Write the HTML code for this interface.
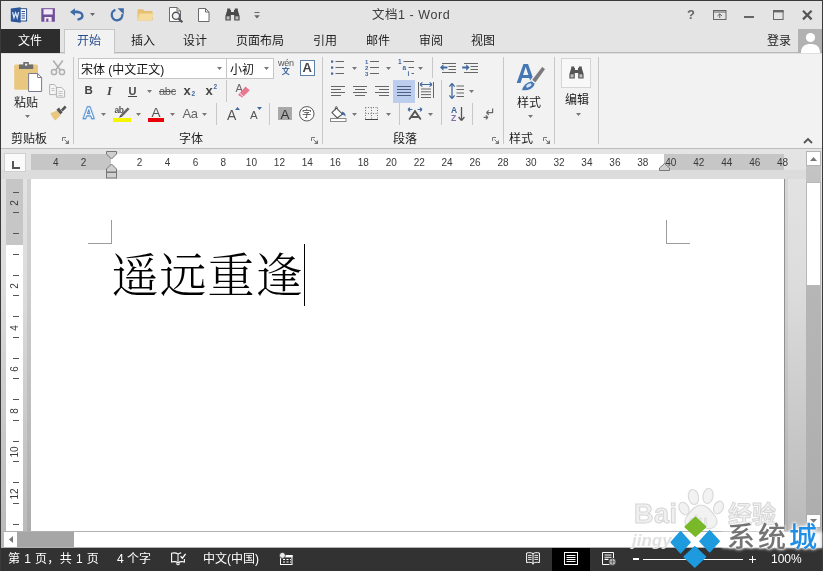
<!DOCTYPE html>
<html lang="zh-CN"><head><meta charset="utf-8"><title>文档1 - Word</title>
<style>
html,body{margin:0;padding:0;}
body{width:823px;height:571px;overflow:hidden;background:#e4e4e4;font-family:"Liberation Sans","Noto Sans CJK SC",sans-serif;font-size:12px;color:#262626;}
#win{position:relative;width:823px;height:571px;overflow:hidden;will-change:transform;}
.a{position:absolute;display:block;}
.t{white-space:nowrap;}
svg{overflow:visible;}
</style></head><body><div id="win">
<div class="a" style="left:0px;top:0px;width:823px;height:53px;background:#e4e4e4;"></div>
<div class="a" style="left:0px;top:53px;width:823px;height:96px;background:#f2f2f2;"></div>
<div class="a" style="left:0px;top:52px;width:823px;height:1px;background:#b8b8b8;"></div>
<div class="a" style="left:0px;top:53px;width:823px;height:1px;background:#dedede;"></div>
<div class="a" style="left:0px;top:148px;width:823px;height:1px;background:#bdbdbd;"></div>
<div class="a" style="left:0px;top:149px;width:823px;height:399px;background:#e3e3e3;background:linear-gradient(#e4e4e4 0%,#dcdcdc 35%,#c8c8c8 70%,#b8b8b8 100%);"></div>
<div class="a" style="left:1px;top:170px;width:805px;height:9px;background:#dcdcdc;"></div>
<span class="a t" style="left:372px;top:8.5px;font-size:12.5px;line-height:12.5px;color:#3c3c3c;letter-spacing:0.55px;">文档1 - Word</span>
<div class="a" style="left:1px;top:29px;width:59px;height:24px;background:#2d2d2d;"></div>
<span class="a t" style="left:18px;top:35px;font-size:12px;line-height:12px;color:#fff;">文件</span>
<div class="a" style="left:64px;top:29px;width:51px;height:25px;background:#f2f2f2;border:1px solid #c6c6c6;border-bottom:none;box-sizing:border-box;"></div>
<span class="a t" style="left:77px;top:35px;font-size:12px;line-height:12px;color:#2b4f8e;">开始</span>
<span class="a t" style="left:131px;top:35px;font-size:12px;line-height:12px;color:#222;">插入</span>
<span class="a t" style="left:183px;top:35px;font-size:12px;line-height:12px;color:#222;">设计</span>
<span class="a t" style="left:236px;top:35px;font-size:12px;line-height:12px;color:#222;">页面布局</span>
<span class="a t" style="left:313px;top:35px;font-size:12px;line-height:12px;color:#222;">引用</span>
<span class="a t" style="left:366px;top:35px;font-size:12px;line-height:12px;color:#222;">邮件</span>
<span class="a t" style="left:419px;top:35px;font-size:12px;line-height:12px;color:#222;">审阅</span>
<span class="a t" style="left:471px;top:35px;font-size:12px;line-height:12px;color:#222;">视图</span>
<span class="a t" style="left:767px;top:34.5px;font-size:12px;line-height:12px;color:#222;">登录</span>
<div class="a" style="left:798px;top:29px;width:25px;height:24px;background:#b2b2b2;"></div>
<svg class="a" style="left:798px;top:29px;" width="25" height="24" viewBox="0 0 25 24"><circle cx="12.5" cy="8.5" r="4.6" fill="#fff"/><path d="M3 24C3 17 7 15 12.5 15S22 17 22 24Z" fill="#fff"/></svg>
<span class="a t" style="left:11px;top:133px;font-size:12px;line-height:12px;color:#1c1c1c;">剪贴板</span>
<span class="a t" style="left:179px;top:133px;font-size:12px;line-height:12px;color:#1c1c1c;">字体</span>
<span class="a t" style="left:393px;top:133px;font-size:12px;line-height:12px;color:#1c1c1c;">段落</span>
<span class="a t" style="left:509px;top:133px;font-size:12px;line-height:12px;color:#1c1c1c;">样式</span>
<div class="a" style="left:73px;top:57px;width:1px;height:87px;background:#c8c8c8;"></div>
<div class="a" style="left:322px;top:57px;width:1px;height:87px;background:#c8c8c8;"></div>
<div class="a" style="left:503px;top:57px;width:1px;height:87px;background:#c8c8c8;"></div>
<div class="a" style="left:554px;top:57px;width:1px;height:87px;background:#c8c8c8;"></div>
<div class="a" style="left:598px;top:57px;width:1px;height:87px;background:#c8c8c8;"></div>
<svg class="a" style="left:62px;top:137px;" width="7" height="7" viewBox="0 0 7 7"><path d="M0.5 4V0.5H4" fill="none" stroke="#777" stroke-width="1"/><path d="M2.5 2.5L5.5 5.5" fill="none" stroke="#777" stroke-width="1"/><path d="M7 3V7H3Z" fill="#777"/></svg>
<svg class="a" style="left:311px;top:137px;" width="7" height="7" viewBox="0 0 7 7"><path d="M0.5 4V0.5H4" fill="none" stroke="#777" stroke-width="1"/><path d="M2.5 2.5L5.5 5.5" fill="none" stroke="#777" stroke-width="1"/><path d="M7 3V7H3Z" fill="#777"/></svg>
<svg class="a" style="left:492px;top:137px;" width="7" height="7" viewBox="0 0 7 7"><path d="M0.5 4V0.5H4" fill="none" stroke="#777" stroke-width="1"/><path d="M2.5 2.5L5.5 5.5" fill="none" stroke="#777" stroke-width="1"/><path d="M7 3V7H3Z" fill="#777"/></svg>
<svg class="a" style="left:543px;top:137px;" width="7" height="7" viewBox="0 0 7 7"><path d="M0.5 4V0.5H4" fill="none" stroke="#777" stroke-width="1"/><path d="M2.5 2.5L5.5 5.5" fill="none" stroke="#777" stroke-width="1"/><path d="M7 3V7H3Z" fill="#777"/></svg>
<span class="a t" style="left:14px;top:97px;font-size:12px;line-height:12px;color:#1c1c1c;">粘贴</span>
<svg class="a" style="left:25px;top:115px;" width="5" height="3" viewBox="0 0 5 3"><path d="M0 0H5L2.5 3Z" fill="#777"/></svg>
<div class="a" style="left:78px;top:58px;width:149px;height:21px;background:#fff;border:1px solid #c6c6c6;box-sizing:border-box;"></div>
<span class="a t" style="left:81px;top:63.5px;font-size:12px;line-height:12px;color:#111;">宋体 (中文正文)</span>
<svg class="a" style="left:217px;top:67px;" width="5" height="3" viewBox="0 0 5 3"><path d="M0 0H5L2.5 3Z" fill="#777"/></svg>
<div class="a" style="left:226px;top:58px;width:48px;height:21px;background:#fff;border:1px solid #c6c6c6;box-sizing:border-box;"></div>
<span class="a t" style="left:230px;top:63.5px;font-size:12px;line-height:12px;color:#111;">小初</span>
<svg class="a" style="left:264px;top:67px;" width="5" height="3" viewBox="0 0 5 3"><path d="M0 0H5L2.5 3Z" fill="#777"/></svg>
<span class="a t" style="left:517px;top:96.5px;font-size:12px;line-height:12px;color:#1c1c1c;">样式</span>
<svg class="a" style="left:528px;top:115px;" width="5" height="3" viewBox="0 0 5 3"><path d="M0 0H5L2.5 3Z" fill="#777"/></svg>
<div class="a" style="left:561px;top:58px;width:30px;height:30px;background:#f8f8f8;border:1px solid #d4d4d4;box-sizing:border-box;"></div>
<span class="a t" style="left:565px;top:94px;font-size:12px;line-height:12px;color:#1c1c1c;">编辑</span>
<svg class="a" style="left:576px;top:113px;" width="5" height="3" viewBox="0 0 5 3"><path d="M0 0H5L2.5 3Z" fill="#777"/></svg>
<svg class="a" style="left:803px;top:136.5px;" width="10" height="7" viewBox="0 0 10 7"><path d="M1 6L5 2L9 6" fill="none" stroke="#555" stroke-width="1.8"/></svg>
<div class="a" style="left:4px;top:153px;width:22px;height:19px;background:#fafafa;border:1px solid #d0d0d0;box-sizing:border-box;"></div>
<svg class="a" style="left:12px;top:161px;" width="8" height="8" viewBox="0 0 8 8"><path d="M1 0V7H8" fill="none" stroke="#555" stroke-width="2"/></svg>
<div class="a" style="left:31px;top:154px;width:753px;height:16px;background:#c6c6c6;"></div>
<div class="a" style="left:111px;top:154px;width:553px;height:16px;background:#fff;"></div>
<span class="a t" style="left:45.7px;top:158px;width:20px;text-align:center;font-size:10px;line-height:10px;color:#3a3a3a;">4</span>
<span class="a t" style="left:73.6px;top:158px;width:20px;text-align:center;font-size:10px;line-height:10px;color:#3a3a3a;">2</span>
<span class="a t" style="left:129.6px;top:158px;width:20px;text-align:center;font-size:10px;line-height:10px;color:#3a3a3a;">2</span>
<span class="a t" style="left:157.5px;top:158px;width:20px;text-align:center;font-size:10px;line-height:10px;color:#3a3a3a;">4</span>
<span class="a t" style="left:185.5px;top:158px;width:20px;text-align:center;font-size:10px;line-height:10px;color:#3a3a3a;">6</span>
<span class="a t" style="left:213.4px;top:158px;width:20px;text-align:center;font-size:10px;line-height:10px;color:#3a3a3a;">8</span>
<span class="a t" style="left:241.4px;top:158px;width:20px;text-align:center;font-size:10px;line-height:10px;color:#3a3a3a;">10</span>
<span class="a t" style="left:269.4px;top:158px;width:20px;text-align:center;font-size:10px;line-height:10px;color:#3a3a3a;">12</span>
<span class="a t" style="left:297.3px;top:158px;width:20px;text-align:center;font-size:10px;line-height:10px;color:#3a3a3a;">14</span>
<span class="a t" style="left:325.3px;top:158px;width:20px;text-align:center;font-size:10px;line-height:10px;color:#3a3a3a;">16</span>
<span class="a t" style="left:353.2px;top:158px;width:20px;text-align:center;font-size:10px;line-height:10px;color:#3a3a3a;">18</span>
<span class="a t" style="left:381.2px;top:158px;width:20px;text-align:center;font-size:10px;line-height:10px;color:#3a3a3a;">20</span>
<span class="a t" style="left:409.2px;top:158px;width:20px;text-align:center;font-size:10px;line-height:10px;color:#3a3a3a;">22</span>
<span class="a t" style="left:437.1px;top:158px;width:20px;text-align:center;font-size:10px;line-height:10px;color:#3a3a3a;">24</span>
<span class="a t" style="left:465.1px;top:158px;width:20px;text-align:center;font-size:10px;line-height:10px;color:#3a3a3a;">26</span>
<span class="a t" style="left:493.0px;top:158px;width:20px;text-align:center;font-size:10px;line-height:10px;color:#3a3a3a;">28</span>
<span class="a t" style="left:521.0px;top:158px;width:20px;text-align:center;font-size:10px;line-height:10px;color:#3a3a3a;">30</span>
<span class="a t" style="left:549.0px;top:158px;width:20px;text-align:center;font-size:10px;line-height:10px;color:#3a3a3a;">32</span>
<span class="a t" style="left:576.9px;top:158px;width:20px;text-align:center;font-size:10px;line-height:10px;color:#3a3a3a;">34</span>
<span class="a t" style="left:604.9px;top:158px;width:20px;text-align:center;font-size:10px;line-height:10px;color:#3a3a3a;">36</span>
<span class="a t" style="left:632.8px;top:158px;width:20px;text-align:center;font-size:10px;line-height:10px;color:#3a3a3a;">38</span>
<span class="a t" style="left:660.8px;top:158px;width:20px;text-align:center;font-size:10px;line-height:10px;color:#3a3a3a;">40</span>
<span class="a t" style="left:688.8px;top:158px;width:20px;text-align:center;font-size:10px;line-height:10px;color:#3a3a3a;">42</span>
<span class="a t" style="left:716.7px;top:158px;width:20px;text-align:center;font-size:10px;line-height:10px;color:#3a3a3a;">44</span>
<span class="a t" style="left:744.7px;top:158px;width:20px;text-align:center;font-size:10px;line-height:10px;color:#3a3a3a;">46</span>
<span class="a t" style="left:772.6px;top:158px;width:20px;text-align:center;font-size:10px;line-height:10px;color:#3a3a3a;">48</span>
<svg class="a" style="left:106px;top:151px;" width="11" height="28" viewBox="0 0 11 28"><path d="M0.5 0.5H10.5V3L5.5 8L0.5 3Z" fill="#cfcfcf" stroke="#777"/><path d="M0.5 21V18L5.5 13L10.5 18V21Z" fill="#cfcfcf" stroke="#777"/><rect x="0.5" y="21.5" width="10" height="5.5" fill="#cfcfcf" stroke="#777"/></svg>
<svg class="a" style="left:659px;top:163px;" width="11" height="8" viewBox="0 0 11 8"><path d="M0.5 7.5V5L5.5 0.5L10.5 5V7.5Z" fill="#cfcfcf" stroke="#777"/></svg>
<div class="a" style="left:27px;top:179px;width:4px;height:353px;background:rgba(0,0,0,0.07);"></div>
<div class="a" style="left:31px;top:179px;width:753px;height:353px;background:#fff;"></div>
<div class="a" style="left:784px;top:179px;width:1px;height:353px;background:#909090;"></div>
<div class="a" style="left:785px;top:179px;width:3px;height:353px;background:rgba(0,0,0,0.05);"></div>
<div class="a" style="left:6px;top:179px;width:17px;height:353px;background:#fff;"></div>
<div class="a" style="left:6px;top:179px;width:17px;height:66px;background:#c6c6c6;"></div>
<div class="a" style="left:13px;top:192px;width:6px;height:1px;background:#555;"></div>
<div class="a" style="left:13px;top:212px;width:6px;height:1px;background:#555;"></div>
<div class="a" style="left:13px;top:233px;width:6px;height:1px;background:#555;"></div>
<div class="a" style="left:13px;top:254px;width:6px;height:1px;background:#555;"></div>
<div class="a" style="left:13px;top:275px;width:6px;height:1px;background:#555;"></div>
<div class="a" style="left:13px;top:295px;width:6px;height:1px;background:#555;"></div>
<div class="a" style="left:13px;top:316px;width:6px;height:1px;background:#555;"></div>
<div class="a" style="left:13px;top:337px;width:6px;height:1px;background:#555;"></div>
<div class="a" style="left:13px;top:358px;width:6px;height:1px;background:#555;"></div>
<div class="a" style="left:13px;top:378px;width:6px;height:1px;background:#555;"></div>
<div class="a" style="left:13px;top:399px;width:6px;height:1px;background:#555;"></div>
<div class="a" style="left:13px;top:420px;width:6px;height:1px;background:#555;"></div>
<div class="a" style="left:13px;top:441px;width:6px;height:1px;background:#555;"></div>
<div class="a" style="left:13px;top:461px;width:6px;height:1px;background:#555;"></div>
<div class="a" style="left:13px;top:482px;width:6px;height:1px;background:#555;"></div>
<div class="a" style="left:13px;top:503px;width:6px;height:1px;background:#555;"></div>
<div class="a" style="left:13px;top:524px;width:6px;height:1px;background:#555;"></div>
<span class="a t" style="left:5px;top:198.0px;width:20px;height:10px;text-align:center;font-size:10px;line-height:10px;color:#3a3a3a;transform:rotate(-90deg);">2</span>
<span class="a t" style="left:5px;top:281.0px;width:20px;height:10px;text-align:center;font-size:10px;line-height:10px;color:#3a3a3a;transform:rotate(-90deg);">2</span>
<span class="a t" style="left:5px;top:322.5px;width:20px;height:10px;text-align:center;font-size:10px;line-height:10px;color:#3a3a3a;transform:rotate(-90deg);">4</span>
<span class="a t" style="left:5px;top:364.0px;width:20px;height:10px;text-align:center;font-size:10px;line-height:10px;color:#3a3a3a;transform:rotate(-90deg);">6</span>
<span class="a t" style="left:5px;top:405.5px;width:20px;height:10px;text-align:center;font-size:10px;line-height:10px;color:#3a3a3a;transform:rotate(-90deg);">8</span>
<span class="a t" style="left:5px;top:447.0px;width:20px;height:10px;text-align:center;font-size:10px;line-height:10px;color:#3a3a3a;transform:rotate(-90deg);">10</span>
<span class="a t" style="left:5px;top:488.5px;width:20px;height:10px;text-align:center;font-size:10px;line-height:10px;color:#3a3a3a;transform:rotate(-90deg);">12</span>
<div class="a" style="left:111px;top:220px;width:1px;height:24px;background:#9c9c9c;"></div>
<div class="a" style="left:88px;top:243px;width:24px;height:1px;background:#9c9c9c;"></div>
<div class="a" style="left:666px;top:220px;width:1px;height:24px;background:#9c9c9c;"></div>
<div class="a" style="left:666px;top:243px;width:24px;height:1px;background:#9c9c9c;"></div>
<span class="a t" style="left:111.5px;top:253px;font-family:'Liberation Serif','Noto Serif CJK SC',serif;font-weight:300;font-size:47px;line-height:47px;letter-spacing:1px;color:#000;">遥远重逢</span>
<div class="a" style="left:304px;top:244px;width:1px;height:62px;background:#000;"></div>
<div class="a" style="left:806px;top:151px;width:15px;height:377px;background:#ababab;background:linear-gradient(#c6c6c6 0%,#b6b6b6 35%,#adadad 100%);"></div>
<div class="a" style="left:806px;top:151px;width:15px;height:15px;background:#fff;border:1px solid #b4b4b4;box-sizing:border-box;"></div>
<svg class="a" style="left:810px;top:157px;" width="7" height="4" viewBox="0 0 7 4"><path d="M0 4L3.5 0L7 4Z" fill="#777"/></svg>
<div class="a" style="left:806px;top:182px;width:15px;height:104px;background:#fff;border:1px solid #b8b8b8;box-sizing:border-box;"></div>
<div class="a" style="left:806px;top:514px;width:15px;height:14px;background:#fff;border:1px solid #ababab;box-sizing:border-box;"></div>
<svg class="a" style="left:810px;top:519px;" width="7" height="4" viewBox="0 0 7 4"><path d="M0 0L3.5 4L7 0Z" fill="#777"/></svg>
<div class="a" style="left:4px;top:531px;width:802px;height:16px;background:#fff;border-top:1px solid #b0b0b0;box-sizing:border-box;"></div>
<div class="a" style="left:1px;top:547px;width:821px;height:1px;background:#b4b4b4;"></div>
<div class="a" style="left:17px;top:532px;width:57px;height:15px;background:#a6a6a6;"></div>
<svg class="a" style="left:9px;top:536px;" width="4" height="7" viewBox="0 0 4 7"><path d="M4 0L0 3.5L4 7Z" fill="#777"/></svg>
<div class="a" style="left:0px;top:548px;width:823px;height:23px;background:#323232;"></div>
<span class="a t" style="left:8px;top:553px;font-size:12px;line-height:12px;color:#fff;letter-spacing:0.4px;">第 1 页，共 1 页</span>
<span class="a t" style="left:117px;top:553px;font-size:12px;line-height:12px;color:#fff;">4 个字</span>
<span class="a t" style="left:203px;top:553px;font-size:12px;line-height:12px;color:#fff;">中文(中国)</span>
<div class="a" style="left:552px;top:548px;width:38px;height:23px;background:#000;"></div>
<div class="a" style="left:643px;top:559px;width:100px;height:1px;background:#fff;"></div>
<div class="a" style="left:633px;top:558px;width:6px;height:2px;background:#fff;"></div>
<div class="a" style="left:749px;top:559px;width:7px;height:1px;background:#fff;"></div>
<div class="a" style="left:752px;top:556px;width:1px;height:7px;background:#fff;"></div>
<div class="a" style="left:693px;top:554px;width:3px;height:11px;background:#fff;"></div>
<span class="a t" style="left:771px;top:553px;font-size:12px;line-height:12px;color:#fff;">100%</span>
<div class="a" style="left:0px;top:0px;width:823px;height:1px;background:#3a3a3a;"></div>
<div class="a" style="left:0px;top:0px;width:1px;height:571px;background:#3a3a3a;"></div>
<div class="a" style="left:822px;top:0px;width:1px;height:571px;background:#3a3a3a;"></div>
<svg class="a" style="left:10px;top:7px;" width="18" height="16" viewBox="0 0 18 16"><rect x="9" y="1.7" width="7.6" height="12.3" fill="#fff" stroke="#2b4f8c" stroke-width="1"/>
<path d="M11.5 4.5H15M11.5 6.7H15M11.5 8.9H15M11.5 11.1H15" stroke="#2b4f8c" stroke-width="1"/>
<path d="M0.8 1.6L10.7 0.2V15.8L0.8 14.4Z" fill="#2b579a"/>
<path d="M2.6 5.2L4 10.8L5.6 6L7.2 10.8L8.6 5.2" fill="none" stroke="#dbe6f6" stroke-width="1.3"/></svg>
<svg class="a" style="left:41px;top:8px;" width="14" height="14" viewBox="0 0 14 14"><rect x="0.3" y="0.2" width="13.6" height="13.5" fill="#6f4f96"/>
<rect x="2.5" y="1.2" width="9.2" height="5.3" fill="#f3e9fb"/>
<rect x="3.4" y="9" width="7.2" height="4.7" fill="#f3e9fb"/>
<rect x="5.2" y="10.6" width="2.2" height="3.1" fill="#6f4f96"/></svg>
<svg class="a" style="left:69px;top:8px;" width="16" height="13" viewBox="0 0 16 13"><path d="M1 4L6 0.2V2.6C11 2.2 14.6 4.6 14.6 8C14.6 10.8 12 12.4 8.4 12.6V10.4C10.6 10.2 12.2 9.4 12.2 7.8C12.2 6 9.8 5.2 6 5.4V7.8Z" fill="#3e6ca8"/></svg>
<svg class="a" style="left:90px;top:13px;" width="5" height="3" viewBox="0 0 5 3"><path d="M0 0H5L2.5 3Z" fill="#666"/></svg>
<svg class="a" style="left:110px;top:8px;" width="14" height="13" viewBox="0 0 14 13"><path d="M5.4 1.9A5.3 5.3 0 1 0 12.3 6.2" fill="none" stroke="#3e6ca8" stroke-width="2.3"/>
<path d="M7.6 0.2H13.8V6.4Z" fill="#3e6ca8"/></svg>
<svg class="a" style="left:137px;top:8px;" width="17" height="13" viewBox="0 0 17 13"><path d="M0.5 12.5V2.5C0.5 1.8 1 1.3 1.7 1.3H6L7.6 3H14.5C15.2 3 15.6 3.4 15.6 4V12.5Z" fill="#e6c073"/>
<path d="M0.5 12.5L2.6 5.6H16.6L14.6 12.5Z" fill="#f5dc9c"/></svg>
<svg class="a" style="left:168px;top:7px;" width="16" height="16" viewBox="0 0 16 16"><path d="M1.5 0.5H9L12.5 4V14.5H1.5Z" fill="#fff" stroke="#6a6a6a"/>
<path d="M9 0.5V4H12.5" fill="none" stroke="#6a6a6a"/>
<circle cx="8" cy="8.8" r="3.6" fill="#eef4fb" stroke="#555" stroke-width="1.4"/>
<path d="M10.6 11.6L14.4 15.2" stroke="#555" stroke-width="2.2"/></svg>
<svg class="a" style="left:198px;top:8px;" width="12" height="14" viewBox="0 0 12 14"><path d="M0.5 0.5H7.5L11 4V13.5H0.5Z" fill="#fff" stroke="#6a6a6a"/><path d="M7.5 0.5V4H11" fill="none" stroke="#6a6a6a"/></svg>
<svg class="a" style="left:225px;top:8px;" width="15" height="13" viewBox="0 0 15 13"><path d="M2.2 0.5H5.2V2H6V4H9V2H9.8V0.5H12.8V2.2L14.6 8V12.5H9.2V7H5.8V12.5H0.4V8L2.2 2.2Z" fill="#4a4a4a"/>
<rect x="1.6" y="8.3" width="3" height="3.2" fill="#bdbdbd"/><rect x="10.4" y="8.3" width="3" height="3.2" fill="#bdbdbd"/></svg>
<svg class="a" style="left:254px;top:12px;" width="6" height="7" viewBox="0 0 6 7"><path d="M0.5 0.5H5.5" stroke="#666"/><path d="M0.2 3.2H5.8L3 6.4Z" fill="#666"/></svg>
<span class="a t" style="left:687px;top:8px;font-size:13px;line-height:14px;font-weight:bold;color:#666;">?</span>
<svg class="a" style="left:713px;top:10px;" width="14" height="10" viewBox="0 0 14 10"><rect x="0.5" y="0.5" width="12.5" height="9" fill="none" stroke="#666"/><path d="M0.5 2H13" stroke="#666"/><path d="M6.75 8V4M4.5 6L6.75 3.8L9 6" fill="none" stroke="#666"/></svg>
<div class="a" style="left:744px;top:16px;width:10px;height:2px;background:#666;"></div>
<svg class="a" style="left:773px;top:10px;" width="11" height="10" viewBox="0 0 11 10"><rect x="0.5" y="1" width="9.6" height="8.5" fill="none" stroke="#666"/><rect x="0" y="0" width="10.6" height="2.4" fill="#666"/></svg>
<svg class="a" style="left:802px;top:10px;" width="11" height="10" viewBox="0 0 11 10"><path d="M1 0.8L9.6 9.4M9.6 0.8L1 9.4" stroke="#555" stroke-width="2.2"/></svg>
<svg class="a" style="left:14px;top:61px;" width="29" height="32" viewBox="0 0 29 32"><rect x="0.2" y="3.6" width="23.8" height="25.2" rx="1.5" fill="#e9c77f"/>
<path d="M5 8V3.6H9.3V1H14.8V3.6H19.2V8Z" fill="#6e6e6e"/><rect x="11" y="2.6" width="2.2" height="2" fill="#f1f1f1"/>
<path d="M14.6 12.5H23.6L27.6 16.5V30.5H14.6Z" fill="#fff" stroke="#7a7a8a" stroke-width="1"/>
<path d="M23.6 12.5V16.5H27.6" fill="none" stroke="#7a7a8a" stroke-width="1"/></svg>
<svg class="a" style="left:50px;top:60px;" width="16" height="16" viewBox="0 0 16 16"><path d="M3.2 0.6L10.6 10.4M12.8 0.6L5.4 10.4" stroke="#b0b0b0" stroke-width="1.7" fill="none"/>
<circle cx="4" cy="12" r="2.6" fill="none" stroke="#b0b0b0" stroke-width="1.5"/><circle cx="12" cy="12" r="2.6" fill="none" stroke="#b0b0b0" stroke-width="1.5"/></svg>
<svg class="a" style="left:49px;top:84px;" width="17" height="14" viewBox="0 0 17 14"><path d="M0.6 0.5H5L7.4 2.6V10.6H0.6Z" fill="#f4f4f4" stroke="#b4b4b4"/>
<path d="M2.4 4.5H5.6M2.4 6.5H5.6" stroke="#c4c4c4"/>
<path d="M7.6 3.5H12.6L15.6 6.4V13.2H7.6Z" fill="#f4f4f4" stroke="#b4b4b4"/>
<path d="M9.4 7.5H13.6M9.4 9.5H13.6M9.4 11.5H13.6" stroke="#c4c4c4"/></svg>
<svg class="a" style="left:50px;top:105px;" width="17" height="16" viewBox="0 0 17 16"><path d="M0.4 8.2L7 5.6L10.6 10.4L5.2 15.4C3.4 13.6 1.4 11 0.4 8.2Z" fill="#e9c77f"/>
<path d="M6.4 4.8L9 2.6L12.6 7.2L10.4 9.6Z" fill="#555"/>
<path d="M11 4.4L14.8 0.6L16.6 2.6L12.6 6.4Z" fill="#555"/></svg>
<span class="a t" style="left:84.5px;top:85px;font-size:11.5px;line-height:11.5px;color:#444;font-weight:bold;">B</span>
<span class="a t" style="left:107px;top:84px;font-size:13px;line-height:13px;color:#444;font-weight:bold;font-style:italic;font-family:'Liberation Serif',serif;font-size:12.5px;top:84.5px;">I</span>
<span class="a t" style="left:128.5px;top:85px;font-size:11px;line-height:11px;color:#444;font-weight:bold;top:85.5px;">U</span>
<div class="a" style="left:128px;top:96px;width:9px;height:1px;background:#444;"></div>
<svg class="a" style="left:147px;top:90px;" width="5" height="3" viewBox="0 0 5 3"><path d="M0 0H5L2.5 3Z" fill="#777"/></svg>
<span class="a t" style="left:159px;top:85.5px;font-size:11px;line-height:11px;color:#5a5a5a;text-decoration:line-through;letter-spacing:-0.3px;">abc</span>
<span class="a t" style="left:183.5px;top:84px;font-size:13px;line-height:13px;color:#444;font-weight:bold;">x</span>
<span class="a t" style="left:191.5px;top:91px;font-size:6.5px;line-height:6.5px;color:#41689f;font-weight:bold;">2</span>
<span class="a t" style="left:205.5px;top:84px;font-size:13px;line-height:13px;color:#444;font-weight:bold;">x</span>
<span class="a t" style="left:213.5px;top:84px;font-size:6.5px;line-height:6.5px;color:#41689f;font-weight:bold;">2</span>
<div class="a" style="left:226px;top:80px;width:1px;height:22px;background:#c8c8c8;"></div>
<span class="a t" style="left:235.5px;top:83px;font-size:11px;line-height:11px;color:#666;">A</span>
<svg class="a" style="left:237px;top:86px;" width="14" height="12" viewBox="0 0 14 12"><path d="M1 9L8.5 0.6L12.8 4.2L5.4 11.6Z" fill="#e9778f"/><path d="M2.6 7.2L7 11" stroke="#f1f1f1" stroke-width="1"/></svg>
<svg class="a" style="left:82px;top:106px;" width="14" height="14" viewBox="0 0 14 14"><path d="M1.2 12.6L5.4 0.9H8L12.2 12.6H9.7L8.8 9.9H4.6L3.7 12.6ZM5.4 7.6H8L6.7 3.6Z" fill="#fff" fill-rule="evenodd" stroke="#cfe2f6" stroke-width="2.6" stroke-linejoin="round"/><path d="M1.2 12.6L5.4 0.9H8L12.2 12.6H9.7L8.8 9.9H4.6L3.7 12.6ZM5.4 7.6H8L6.7 3.6Z" fill="#fff" fill-rule="evenodd" stroke="#5f93cc" stroke-width="1.1" stroke-linejoin="round"/></svg>
<svg class="a" style="left:101px;top:113px;" width="5" height="3" viewBox="0 0 5 3"><path d="M0 0H5L2.5 3Z" fill="#777"/></svg>
<span class="a t" style="left:114.5px;top:105.5px;font-size:8.5px;line-height:8.5px;color:#555;font-weight:bold;letter-spacing:-0.4px;">ab</span>
<svg class="a" style="left:118px;top:107px;" width="13" height="11" viewBox="0 0 13 11"><path d="M9.6 0.4L11.6 2L4.4 9.6L2.4 8Z" fill="#666"/><path d="M2.4 8L4.4 9.6L1 10.8Z" fill="#444"/></svg>
<div class="a" style="left:113px;top:118px;width:18px;height:4px;background:#f5f500;"></div>
<svg class="a" style="left:136px;top:113px;" width="5" height="3" viewBox="0 0 5 3"><path d="M0 0H5L2.5 3Z" fill="#777"/></svg>
<span class="a t" style="left:151.5px;top:106px;font-size:13.5px;line-height:13.5px;color:#555;">A</span>
<div class="a" style="left:148px;top:118px;width:16px;height:4px;background:#e8000a;"></div>
<svg class="a" style="left:170px;top:113px;" width="5" height="3" viewBox="0 0 5 3"><path d="M0 0H5L2.5 3Z" fill="#777"/></svg>
<span class="a t" style="left:182.5px;top:106.5px;font-size:13px;line-height:13px;color:#666;letter-spacing:-0.3px;">Aa</span>
<svg class="a" style="left:202px;top:113px;" width="5" height="3" viewBox="0 0 5 3"><path d="M0 0H5L2.5 3Z" fill="#777"/></svg>
<div class="a" style="left:216px;top:103px;width:1px;height:22px;background:#c8c8c8;"></div>
<span class="a t" style="left:227px;top:107.5px;font-size:14px;line-height:14px;color:#555;">A</span>
<svg class="a" style="left:235px;top:107px;" width="5" height="3" viewBox="0 0 5 3"><path d="M0 3H5L2.5 0Z" fill="#41689f"/></svg>
<span class="a t" style="left:250px;top:109.5px;font-size:11.5px;line-height:11.5px;color:#555;">A</span>
<svg class="a" style="left:257px;top:107px;" width="5" height="3" viewBox="0 0 5 3"><path d="M0 0H5L2.5 3Z" fill="#41689f"/></svg>
<div class="a" style="left:269px;top:103px;width:1px;height:22px;background:#c8c8c8;"></div>
<div class="a" style="left:278px;top:107px;width:14px;height:13px;background:#a9a9a9;"></div>
<span class="a t" style="left:280.5px;top:107.5px;font-size:13.5px;line-height:13.5px;color:#333;">A</span>
<svg class="a" style="left:299px;top:106px;" width="16" height="16" viewBox="0 0 16 16"><circle cx="7.8" cy="7.8" r="7.2" fill="#fff" stroke="#555" stroke-width="1"/></svg>
<span class="a t" style="left:302px;top:109px;font-size:10px;line-height:10px;color:#444;font-size:9.5px;">字</span>
<span class="a t" style="left:278px;top:58.8px;font-size:9px;line-height:9px;color:#555;letter-spacing:-0.2px;">wén</span>
<span class="a t" style="left:281.8px;top:68.2px;font-size:8px;line-height:8px;color:#41689f;font-weight:bold;">文</span>
<div class="a" style="left:299.5px;top:60px;width:15px;height:15.5px;background:#fff;border:1px solid #5f7fa8;box-sizing:border-box;"></div>
<span class="a t" style="left:302.5px;top:61px;font-size:13.5px;line-height:13.5px;color:#444;font-weight:bold;font-size:13px;">A</span>
<svg class="a" style="left:331px;top:61px;" width="13" height="14" viewBox="0 0 13 14"><rect x="0" y="-0.5" width="2.2" height="2.2" fill="#41689f"/><rect x="0" y="5.5" width="2.2" height="2.2" fill="#41689f"/><rect x="0" y="11.5" width="2.2" height="2.2" fill="#41689f"/>
<rect x="4.5" y="0" width="8.5" height="1" fill="#666"/><rect x="4.5" y="6" width="8.5" height="1" fill="#666"/><rect x="4.5" y="12" width="8.5" height="1" fill="#666"/></svg>
<svg class="a" style="left:352px;top:67px;" width="5" height="3" viewBox="0 0 5 3"><path d="M0 0H5L2.5 3Z" fill="#777"/></svg>
<span class="a t" style="left:365px;top:58.6px;font-size:6px;line-height:6px;color:#41689f;font-weight:bold;">1</span>
<span class="a t" style="left:365px;top:64.6px;font-size:6px;line-height:6px;color:#41689f;font-weight:bold;">2</span>
<span class="a t" style="left:365px;top:70.6px;font-size:6px;line-height:6px;color:#41689f;font-weight:bold;">3</span>
<svg class="a" style="left:370px;top:61px;" width="9" height="14" viewBox="0 0 9 14"><rect x="0" y="0" width="9" height="1" fill="#666"/><rect x="0" y="6" width="9" height="1" fill="#666"/><rect x="0" y="12" width="9" height="1" fill="#666"/></svg>
<svg class="a" style="left:386px;top:67px;" width="5" height="3" viewBox="0 0 5 3"><path d="M0 0H5L2.5 3Z" fill="#777"/></svg>
<span class="a t" style="left:398px;top:58.8px;font-size:6.5px;line-height:6.5px;color:#41689f;font-weight:bold;">1</span>
<span class="a t" style="left:402.5px;top:64.8px;font-size:6.5px;line-height:6.5px;color:#41689f;font-weight:bold;">a</span>
<span class="a t" style="left:407.5px;top:70.8px;font-size:6.5px;line-height:6.5px;color:#41689f;font-weight:bold;">i</span>
<svg class="a" style="left:403px;top:61px;" width="11" height="14" viewBox="0 0 11 14"><rect x="0.5" y="0" width="10.5" height="1" fill="#666"/><rect x="5.5" y="6" width="5.5" height="1" fill="#666"/><rect x="8.5" y="12" width="2.5" height="1" fill="#666"/></svg>
<svg class="a" style="left:418px;top:67px;" width="5" height="3" viewBox="0 0 5 3"><path d="M0 0H5L2.5 3Z" fill="#777"/></svg>
<div class="a" style="left:432px;top:57px;width:1px;height:21px;background:#c8c8c8;"></div>
<svg class="a" style="left:440px;top:63px;" width="16" height="11" viewBox="0 0 16 11"><rect x="2" y="0" width="14" height="1" fill="#666"/><rect x="8.5" y="3" width="7.5" height="1" fill="#666"/><rect x="8.5" y="6" width="7.5" height="1" fill="#666"/><rect x="2" y="9" width="14" height="1" fill="#666"/>
<path d="M0 4.5L3.4 1.2V3.6H7.4V5.4H3.4V7.8Z" fill="#41689f"/></svg>
<svg class="a" style="left:462px;top:63px;" width="16" height="11" viewBox="0 0 16 11"><rect x="2" y="0" width="14" height="1" fill="#666"/><rect x="8.5" y="3" width="7.5" height="1" fill="#666"/><rect x="8.5" y="6" width="7.5" height="1" fill="#666"/><rect x="2" y="9" width="14" height="1" fill="#666"/>
<path d="M7.6 4.5L4.2 1.2V3.6H0.2V5.4H4.2V7.8Z" fill="#41689f"/></svg>
<svg class="a" style="left:331px;top:86px;" width="14" height="12" viewBox="0 0 14 12"><rect x="0" y="0" width="14" height="1" fill="#666"/><rect x="0" y="3" width="10" height="1" fill="#666"/><rect x="0" y="6" width="14" height="1" fill="#666"/><rect x="0" y="9" width="10" height="1" fill="#666"/></svg>
<svg class="a" style="left:353px;top:86px;" width="14" height="12" viewBox="0 0 14 12"><rect x="0.0" y="0" width="14" height="1" fill="#666"/><rect x="2.0" y="3" width="10" height="1" fill="#666"/><rect x="0.0" y="6" width="14" height="1" fill="#666"/><rect x="2.0" y="9" width="10" height="1" fill="#666"/></svg>
<svg class="a" style="left:375px;top:86px;" width="14" height="12" viewBox="0 0 14 12"><rect x="0" y="0" width="14" height="1" fill="#666"/><rect x="4" y="3" width="10" height="1" fill="#666"/><rect x="0" y="6" width="14" height="1" fill="#666"/><rect x="4" y="9" width="10" height="1" fill="#666"/></svg>
<div class="a" style="left:393px;top:80px;width:22px;height:23px;background:#bccdee;"></div>
<svg class="a" style="left:397px;top:86px;" width="14" height="12" viewBox="0 0 14 12"><rect x="0" y="0" width="14" height="1" fill="#4d6082"/><rect x="0" y="3" width="14" height="1" fill="#4d6082"/><rect x="0" y="6" width="14" height="1" fill="#4d6082"/><rect x="0" y="9" width="14" height="1" fill="#4d6082"/></svg>
<svg class="a" style="left:418px;top:82px;" width="16" height="16" viewBox="0 0 16 16"><rect x="0" y="0" width="1" height="16" fill="#666"/><rect x="15" y="0" width="1" height="16" fill="#666"/>
<path d="M2 2.5H14M2 2.5L4.4 0.4M2 2.5L4.4 4.6M14 2.5L11.6 0.4M14 2.5L11.6 4.6" stroke="#41689f" stroke-width="1.2" fill="none"/>
<rect x="3" y="6.5" width="10" height="1" fill="#666"/><rect x="3" y="9.3" width="10" height="1" fill="#666"/><rect x="3" y="12.1" width="10" height="1" fill="#666"/><rect x="3" y="15" width="10" height="1" fill="#666"/></svg>
<div class="a" style="left:441px;top:80px;width:1px;height:45px;background:#c8c8c8;"></div>
<svg class="a" style="left:449px;top:83px;" width="15" height="16" viewBox="0 0 15 16"><path d="M3 1V15M3 0.4L0.4 3.6M3 0.4L5.6 3.6M3 15.6L0.4 12.4M3 15.6L5.6 12.4" stroke="#41689f" stroke-width="1.3" fill="none"/>
<rect x="7.5" y="2.5" width="7.5" height="1" fill="#666"/><rect x="7.5" y="6" width="7.5" height="1" fill="#666"/><rect x="7.5" y="9.5" width="7.5" height="1" fill="#666"/><rect x="7.5" y="13" width="7.5" height="1" fill="#666"/></svg>
<svg class="a" style="left:469px;top:90px;" width="5" height="3" viewBox="0 0 5 3"><path d="M0 0H5L2.5 3Z" fill="#777"/></svg>
<svg class="a" style="left:330px;top:106px;" width="17" height="16" viewBox="0 0 17 16"><rect x="0.5" y="12.5" width="15.5" height="3" fill="#fff" stroke="#8a8a8a"/>
<path d="M6.4 2.2L12.4 8.2L7.2 12L2 6.6Z" fill="#fff" stroke="#555" stroke-width="1.1"/>
<path d="M5.4 4.2V1.4C5.4 0.4 7.2 0.4 7.2 1.4V3" fill="none" stroke="#555" stroke-width="1"/>
<path d="M12 5.4C14.4 6 15.8 7.8 15.6 10.6C14.6 9.2 13.2 8.6 11.2 8.8Z" fill="#41689f"/></svg>
<svg class="a" style="left:352px;top:113px;" width="5" height="3" viewBox="0 0 5 3"><path d="M0 0H5L2.5 3Z" fill="#777"/></svg>
<svg class="a" style="left:365px;top:107px;" width="13" height="13" viewBox="0 0 13 13"><path d="M0.5 0.5H12.5M0.5 6.5H12.5M0.5 0.5V12.5M6.5 0.5V12.5M12.5 0.5V12.5" stroke="#777" stroke-width="1" stroke-dasharray="1 1.5" fill="none"/>
<rect x="0" y="12" width="13" height="1" fill="#444"/></svg>
<svg class="a" style="left:386px;top:113px;" width="5" height="3" viewBox="0 0 5 3"><path d="M0 0H5L2.5 3Z" fill="#777"/></svg>
<div class="a" style="left:399px;top:103px;width:1px;height:22px;background:#c8c8c8;"></div>
<svg class="a" style="left:407px;top:107px;" width="16" height="13" viewBox="0 0 16 13"><path d="M1 2.5H5.4M10.6 2.5H15M1 2.5L3 0.6M1 2.5L3 4.4M15 2.5L13 0.6M15 2.5L13 4.4" stroke="#41689f" stroke-width="1.2" fill="none"/>
<path d="M2.2 12.6L8 4.2L13.8 12.6M4.6 10H11.4" stroke="#555" stroke-width="1.8" fill="none"/></svg>
<svg class="a" style="left:428px;top:113px;" width="5" height="3" viewBox="0 0 5 3"><path d="M0 0H5L2.5 3Z" fill="#777"/></svg>
<span class="a t" style="left:451px;top:105.5px;font-size:8.5px;line-height:8.5px;color:#41689f;font-weight:bold;">A</span>
<span class="a t" style="left:451px;top:113.5px;font-size:8.5px;line-height:8.5px;color:#8a6ba8;font-weight:bold;">Z</span>
<svg class="a" style="left:458px;top:107px;" width="7" height="14" viewBox="0 0 7 14"><path d="M3.5 0V13M3.5 13.6L0.6 10M3.5 13.6L6.4 10" stroke="#555" stroke-width="1.3" fill="none"/></svg>
<div class="a" style="left:472px;top:103px;width:1px;height:22px;background:#c8c8c8;"></div>
<svg class="a" style="left:483px;top:108px;" width="11" height="13" viewBox="0 0 11 13"><path d="M9.6 0.4V4.6H3.4M3.4 4.6L5.8 2.4M3.4 4.6L5.8 6.8" stroke="#666" stroke-width="1.2" fill="none"/>
<path d="M0.6 9.4H5M5 9.4L2.8 7.4M5 9.4L2.8 11.4" stroke="#666" stroke-width="1.2" fill="none"/></svg>
<span class="a t" style="left:516px;top:60.5px;font-size:27px;line-height:27px;color:#4577b4;font-weight:bold;">A</span>
<svg class="a" style="left:516px;top:61px;" width="29" height="32" viewBox="0 0 29 32"><path d="M30 8L19.4 22.6L15 19.4L26 5Z" fill="#7b7b7b" stroke="#f1f1f1" stroke-width="1.4"/>
<path d="M5 29.6C6.4 24.4 10.6 20 16 19.6L19.4 22.4C18.6 27.4 12.6 31.4 5 29.6Z" fill="#4577b4" stroke="#f1f1f1" stroke-width="1.4"/>
<ellipse cx="12.8" cy="24.6" rx="3" ry="1.6" fill="#d5e3f5" transform="rotate(-30 12.6 24.4)"/></svg>
<svg class="a" style="left:569px;top:66px;" width="15" height="13" viewBox="0 0 15 13"><path d="M2.2 0.5H5.2V2H6V4H9V2H9.8V0.5H12.8V2.2L14.6 8V12.5H9.2V7H5.8V12.5H0.4V8L2.2 2.2Z" fill="#555"/>
<rect x="1.6" y="8.3" width="3" height="3.2" fill="#bdbdbd"/><rect x="10.4" y="8.3" width="3" height="3.2" fill="#bdbdbd"/></svg>
<svg class="a" style="left:171px;top:552px;" width="15" height="13" viewBox="0 0 15 13"><path d="M7 2.2C5.4 0.8 3 0.6 0.6 1.2V10C3 9.4 5.4 9.6 7 11C8.6 9.6 11 9.4 13.4 10V7" fill="none" stroke="#fff" stroke-width="1.1"/>
<path d="M7 2.2V11" stroke="#fff" stroke-width="1"/><path d="M7 2.2C8 1.4 9 1 10.2 0.9" fill="none" stroke="#fff" stroke-width="1.1"/>
<path d="M9.6 4.2L11.4 6.2L14.6 1.8" fill="none" stroke="#fff" stroke-width="1.3"/><path d="M5 11.6L7 13L9 11.6" fill="none" stroke="#fff" stroke-width="1"/></svg>
<svg class="a" style="left:279px;top:552px;" width="14" height="13" viewBox="0 0 14 13"><rect x="1.5" y="3.5" width="11.5" height="9" fill="none" stroke="#fff"/><rect x="1" y="3" width="12.5" height="2.4" fill="#fff"/>
<circle cx="3.4" cy="3.4" r="3" fill="#e8e8e8" stroke="#323232" stroke-width="0.8"/>
<path d="M4 7.5H6M7.5 7.5H9.5M11 7.5H12M4 10H6M7.5 10H9.5M11 10H12" stroke="#fff" stroke-width="1.2"/></svg>
<svg class="a" style="left:526px;top:552px;" width="14" height="13" viewBox="0 0 14 13"><path d="M7 1.6C5.4 0.6 3 0.4 0.6 1V10.6C3 10 5.4 10.2 7 11.4C8.6 10.2 11 10 13.4 10.6V1C11 0.4 8.6 0.6 7 1.6Z" fill="none" stroke="#fff" stroke-width="1"/>
<path d="M7 1.6V12.6" stroke="#fff"/><path d="M2 3.4H5.6M2 5.4H5.6M2 7.4H5.6M8.4 3.4H12M8.4 5.4H12M8.4 7.4H12" stroke="#fff" stroke-width="0.9"/></svg>
<svg class="a" style="left:564px;top:552px;" width="14" height="13" viewBox="0 0 14 13"><rect x="0.5" y="0.5" width="13" height="12" fill="none" stroke="#fff"/><path d="M2.5 3.5H11.5M2.5 5.5H11.5M2.5 7.5H11.5M2.5 9.5H11.5" stroke="#fff" stroke-width="1"/></svg>
<svg class="a" style="left:602px;top:552px;" width="15" height="14" viewBox="0 0 15 14"><path d="M0.5 0.5H11.5V12.5H0.5Z" fill="none" stroke="#fff"/><path d="M2.5 3H9.5M2.5 5.2H9.5M2.5 7.4H6.5" stroke="#fff" stroke-width="1.1"/>
<circle cx="10.4" cy="9.8" r="3.6" fill="#bdbdbd" stroke="#323232" stroke-width="0.8"/><path d="M7.6 9.8H13.2M10.4 7V12.6" stroke="#555" stroke-width="0.8"/></svg>
<span class="a t" style="left:634px;top:500px;font-size:27px;line-height:28px;font-weight:bold;color:#f0f0f0;letter-spacing:0.5px;-webkit-text-stroke:1px #d6d6d6;">Bai</span>
<svg class="a" style="left:678px;top:488px;" width="48" height="44" viewBox="0 0 48 44"><g fill="#f2f2f2" stroke="#d9d9d9" stroke-width="1.2">
<ellipse cx="15.5" cy="9" rx="5" ry="7.6" transform="rotate(-12 15.5 9)"/><ellipse cx="30" cy="8" rx="5" ry="7.6" transform="rotate(10 30 8)"/>
<ellipse cx="6" cy="20.5" rx="4.6" ry="6.6" transform="rotate(-28 6 20.5)"/><ellipse cx="40.5" cy="19.5" rx="4.6" ry="6.6" transform="rotate(26 40.5 19.5)"/>
<path d="M23 17C29 17 33 23 37 28C41 33 38.5 40.5 31.5 40.5C28 40.5 26 39.5 23 39.5S18 40.5 14.5 40.5C7.5 40.5 5 33 9 28C13 23 17 17 23 17Z"/></g></svg>
<span class="a t" style="left:689px;top:513px;font-size:15px;line-height:16px;font-weight:bold;color:#e9e9e9;-webkit-text-stroke:0.5px #d6d6d6;">du</span>
<span class="a t" style="left:728px;top:503px;font-size:24px;line-height:24px;font-weight:bold;color:#f0f0f0;-webkit-text-stroke:1px #d6d6d6;">经验</span>
<span class="a t" style="left:632px;top:532px;font-size:17px;line-height:18px;font-weight:bold;font-style:italic;color:#e0e0e0;">jingy</span>
<div class="a" style="left:722px;top:532px;width:100px;height:16px;background:rgba(255,255,255,0.92);filter:blur(1.5px);"></div>
<svg class="a" style="left:670px;top:516px;" width="52" height="52" viewBox="0 0 52 52"><g stroke-width="1.6" stroke-linejoin="round">
<path d="M25.4 1.4L35.6 10.8L25.4 20.2L15.2 10.8Z" fill="#79b829" stroke="#79b829"/>
<path d="M10.6 15.8L20 26.2L10.6 36.6L1.2 26.2Z" fill="#1e9ade" stroke="#1e9ade"/>
<path d="M39.6 14.8L49.2 25.2L39.6 35.6L30 25.2Z" fill="#1e9ade" stroke="#1e9ade"/>
<path d="M24.8 30.8L35.4 40.8L24.8 50.8L14.2 40.8Z" fill="#1e9ade" stroke="#1e9ade"/></g></svg>
<span class="a t" style="left:727px;top:523.5px;font-size:28px;line-height:28px;font-weight:500;color:#747474;letter-spacing:3px;text-shadow:0 0 2px #fff,0 0 3px #fff,0 0 4px #fff;">系统<span style="color:#1e8ee6;">城</span></span>
</div></body></html>
